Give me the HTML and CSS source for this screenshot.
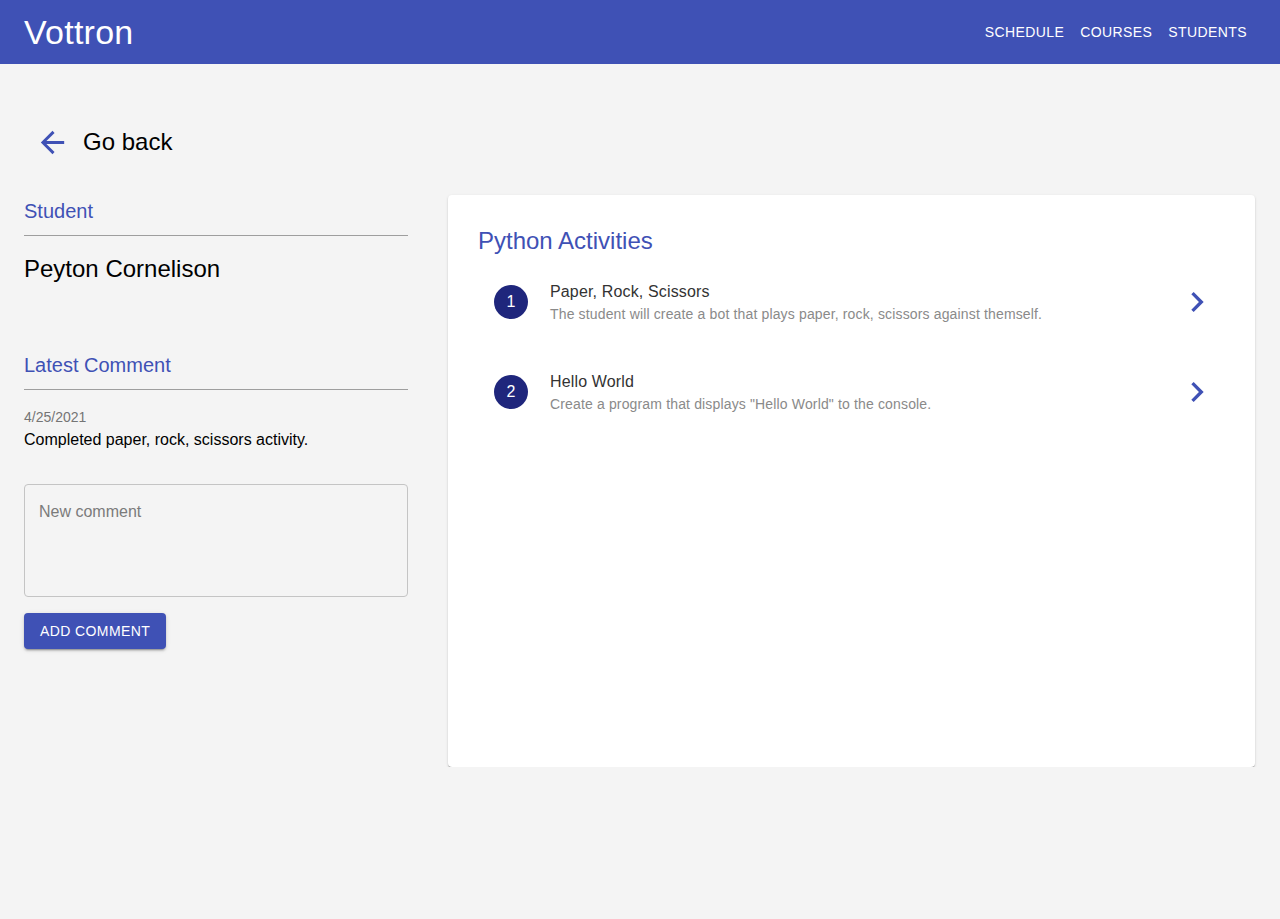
FILE: index.html
```html
<!DOCTYPE html>
<html lang="en">
<head>
<meta charset="utf-8">
<title>Vottron</title>
<link rel="stylesheet" href="styles.css">
</head>
<body>
<header class="appbar">
  <div class="brand">Vottron</div>
  <nav class="nav">
    <a class="nav-btn">Schedule</a>
    <a class="nav-btn">Courses</a>
    <a class="nav-btn">Students</a>
  </nav>
</header>
<main class="page">
  <div class="back-row">
    <a class="back-btn">
      <svg class="back-icon" viewBox="0 0 24 24"><path d="M20 11H7.83l5.59-5.59L12 4l-8 8 8 8 1.41-1.41L7.83 13H20v-2z"/></svg>
      <span class="back-text">Go back</span>
    </a>
  </div>
  <div class="content">
    <aside class="left">
      <h2 class="section-title">Student</h2>
      <div class="student-name">Peyton Cornelison</div>
      <h2 class="section-title latest">Latest Comment</h2>
      <div class="comment-date">4/25/2021</div>
      <div class="comment-text">Completed paper, rock, scissors activity.</div>
      <textarea class="comment-input" placeholder="New comment"></textarea>
      <button class="add-btn">Add Comment</button>
    </aside>
    <section class="card">
      <h1 class="card-title">Python Activities</h1>
      <ul class="activity-list">
        <li class="activity">
          <div class="avatar">1</div>
          <div class="activity-text">
            <div class="activity-name">Paper, Rock, Scissors</div>
            <div class="activity-desc">The student will create a bot that plays paper, rock, scissors against themself.</div>
          </div>
          <svg class="chevron" viewBox="0 0 24 24"><path d="M10 6L8.59 7.41 13.17 12l-4.58 4.59L10 18l6-6z"/></svg>
        </li>
        <li class="activity">
          <div class="avatar">2</div>
          <div class="activity-text">
            <div class="activity-name">Hello World</div>
            <div class="activity-desc">Create a program that displays "Hello World" to the console.</div>
          </div>
          <svg class="chevron" viewBox="0 0 24 24"><path d="M10 6L8.59 7.41 13.17 12l-4.58 4.59L10 18l6-6z"/></svg>
        </li>
      </ul>
    </section>
  </div>
</main>
</body>
</html>
```

FILE: styles.css
```css
* { box-sizing: border-box; }
html, body {
  margin: 0;
  padding: 0;
  background: #f4f4f4;
  font-family: "Liberation Sans", Arial, Helvetica, sans-serif;
  color: #000;
}
.appbar {
  height: 64px;
  background: #3f51b5;
  color: #fff;
  display: flex;
  align-items: center;
  justify-content: space-between;
  padding: 0 25px 0 24px;
}
.brand {
  font-size: 34px;
  line-height: 40px;
  letter-spacing: 0.25px;
}
.nav { display: flex; }
.nav-btn {
  font-size: 14px;
  line-height: 24px;
  letter-spacing: 0.4px;
  text-transform: uppercase;
  padding: 6px 8px;
  color: #fff;
}
.page {
  padding: 54px 25px 0 24px;
}
.back-row {
  height: 48px;
  margin-bottom: 29px;
  display: flex;
  align-items: center;
}
.back-btn {
  display: inline-flex;
  align-items: center;
  padding-left: 11px;
}
.back-icon {
  width: 35px;
  height: 35px;
  fill: #3f51b5;
}
.back-text {
  margin-left: 13px;
  font-size: 24px;
  line-height: 32px;
}
.content {
  display: flex;
  gap: 40px;
  align-items: flex-start;
}
.left {
  width: 384px;
  flex: none;
  display: flex;
  flex-direction: column;
  align-items: flex-start;
}
.section-title {
  align-self: stretch;
  margin: 0;
  font-weight: normal;
  font-size: 20px;
  line-height: 32px;
  color: #3f51b5;
  padding-bottom: 8px;
  border-bottom: 1px solid #9e9e9e;
}
.section-title.latest { margin-top: 64px; }
.student-name {
  margin-top: 17px;
  font-size: 24px;
  line-height: 32px;
}
.comment-date {
  margin-top: 17px;
  font-size: 14px;
  line-height: 20px;
  color: #757575;
}
.comment-text {
  font-size: 16px;
  line-height: 24px;
  margin-top: 1px;
}
.comment-input {
  align-self: stretch;
  margin-top: 32px;
  height: 113px;
  padding: 16.5px 14px 20.5px;
  border: 1px solid #c4c4c4;
  border-radius: 4px;
  background: transparent;
  font-family: inherit;
  font-size: 16px;
  line-height: 19px;
  resize: none;
  color: #000;
}
.comment-input::placeholder { color: #7b7b7b; opacity: 1; }
.add-btn {
  margin-top: 16px;
  height: 36px;
  padding: 6px 16px;
  background: #3f51b5;
  color: #fff;
  border: 0;
  border-radius: 4px;
  font-family: inherit;
  font-size: 14px;
  letter-spacing: 0.4px;
  text-transform: uppercase;
  box-shadow: 0 3px 1px -2px rgba(0,0,0,0.2), 0 2px 2px 0 rgba(0,0,0,0.14), 0 1px 5px 0 rgba(0,0,0,0.12);
}
.card {
  flex: 1;
  height: 572px;
  background: #fff;
  border-radius: 4px;
  box-shadow: 0 2px 1px -1px rgba(0,0,0,0.28), 0 1px 1px 0 rgba(0,0,0,0.16), 0 1px 3px 0 rgba(0,0,0,0.12);
  padding: 30px;
}
.card-title {
  margin: 0;
  font-weight: normal;
  font-size: 24px;
  line-height: 32px;
  color: #3f51b5;
}
.activity-list {
  list-style: none;
  margin: 9px 0 0;
  padding: 0;
}
.activity {
  display: flex;
  align-items: center;
  padding: 8px 8px 8px 16px;
  margin-bottom: 18px;
}
.avatar {
  width: 34px;
  height: 34px;
  flex: none;
  border-radius: 50%;
  background: #1f267c;
  color: #fff;
  font-size: 16px;
  display: flex;
  align-items: center;
  justify-content: center;
  margin-right: 22px;
}
.activity-text {
  flex: 1;
  margin: 6px 0;
}
.activity-name {
  font-size: 16px;
  line-height: 24px;
  letter-spacing: 0.15px;
  color: #333;
}
.activity-desc {
  font-size: 14px;
  line-height: 20px;
  letter-spacing: 0.15px;
  color: #8a8a8a;
}
.chevron {
  width: 40px;
  height: 40px;
  flex: none;
  fill: #3f51b5;
}
```
